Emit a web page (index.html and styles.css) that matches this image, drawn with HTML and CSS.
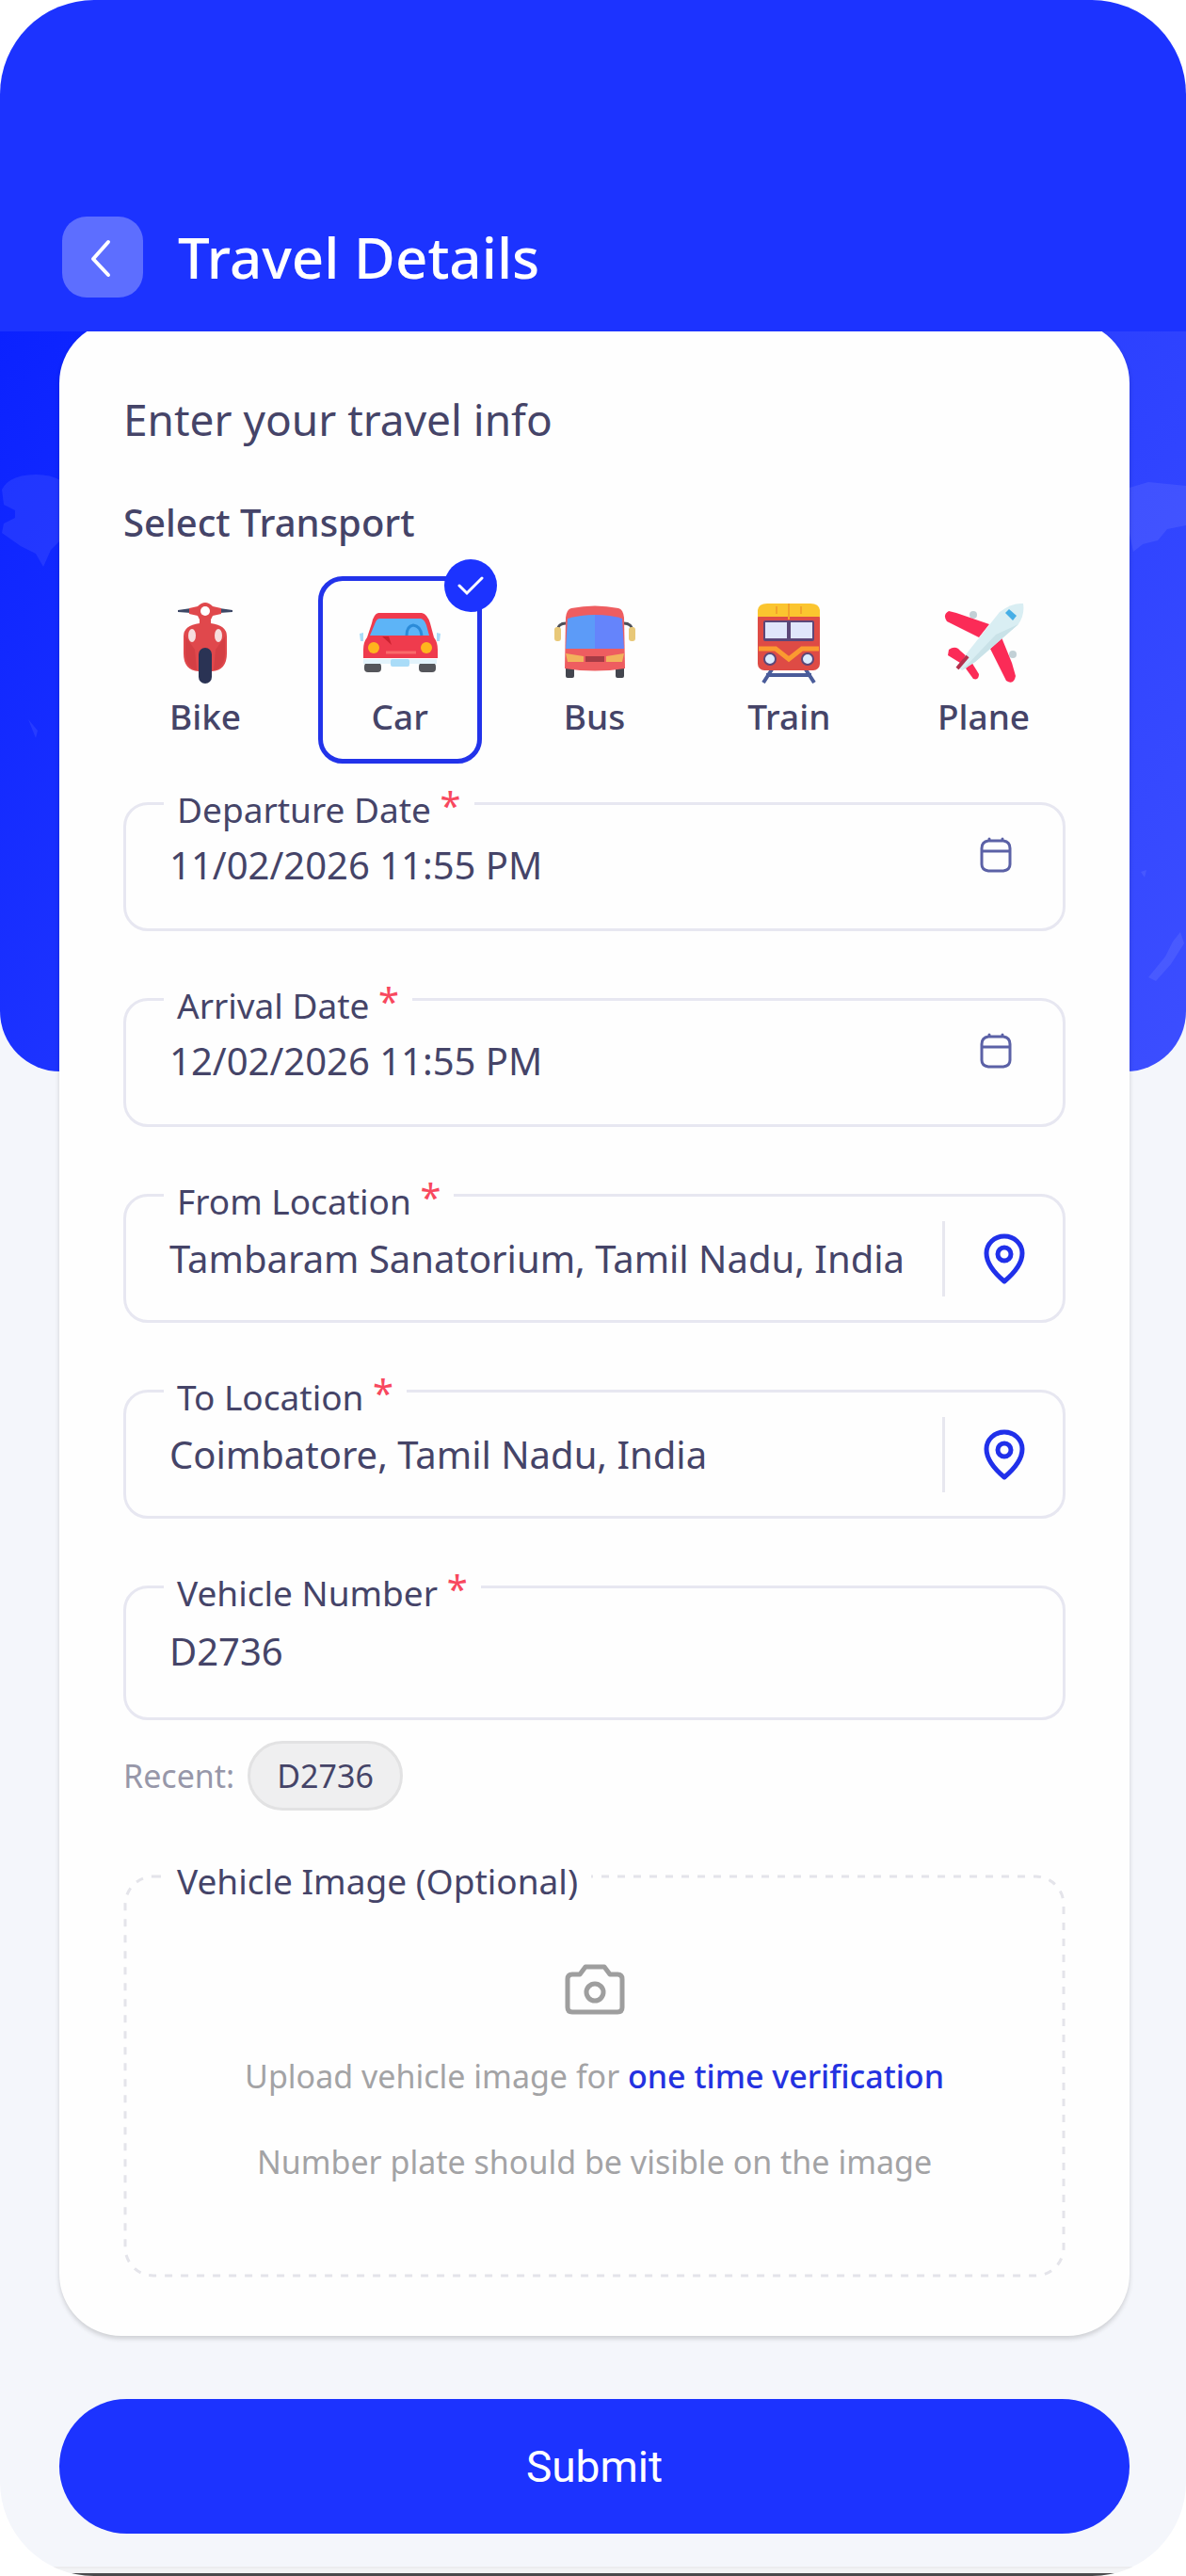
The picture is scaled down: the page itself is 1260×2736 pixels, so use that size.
FILE: index.html
```
<!DOCTYPE html>
<html lang="en">
<head>
  <meta charset="UTF-8">
  <meta name="viewport" content="width=device-width, initial-scale=1">
  <title>Travel Details</title>
  <link rel="stylesheet" href="styles.css">
</head>
<body>
  <div class="screen">
    <header class="header">
      <button type="button" class="back-btn" aria-label="Back">
        <svg viewBox="0 0 86 86"><path d="M49 27 L33 45 L49 62"/></svg>
      </button>
      <h1>Travel Details</h1>
    </header>

    <main>
      <!-- blue map backdrop -->
      <div class="hero">
        <svg class="map map-left" viewBox="0 0 64 786">
          <path d="M2 168 Q10 152 38 152 Q54 152 64 158 V222 L54 232 L46 250 L38 236 L22 228 L2 214 L4 204 L16 198 L16 190 L4 184 Z"/>
          <path d="M30 412 L40 424 L38 432 Z"/>
        </svg>
        <svg class="map map-right" viewBox="0 0 60 786">
          <path d="M0 166 L20 160 L60 164 V206 L40 210 L30 222 L14 226 L4 234 L0 214 Z"/>
          <path d="M46 648 L54 638 L58 650 L44 672 L28 690 L20 686 L38 664 Z"/>
          <path d="M12 574 L18 572 L16 580 Z"/>
        </svg>
      </div>

      <form>
        <div class="card">
          <h2>Enter your travel info</h2>

          <h3 id="transportTitle">Select Transport</h3>
          <div class="transport" role="radiogroup" aria-labelledby="transportTitle">
            <label class="tile">
              <input type="radio" name="transport" value="bike">
              <svg viewBox="0 0 86 86">
                <path d="M14 8 L28 6 V11 L14 10 Z M72 8 L58 6 V11 L72 10 Z" fill="#3d4866"/>
                <path d="M26 6 L35 4 Q43 -4 51 4 L60 6 V12 L51 14 L48 20 H38 L35 14 L26 12 Z" fill="#e0484c"/>
                <path d="M37 17 H49 V22 Q66 24 66 36 V54 Q66 72 50 73 H36 Q20 72 20 54 V36 Q20 24 37 22 Z" fill="#e0484c"/>
                <path d="M22 36 V54 Q22 68 34 72 L32 50 Z M64 36 V54 Q64 68 52 72 L54 50 Z" fill="#d43f44"/>
                <circle cx="43" cy="9" r="5" fill="#fff"/>
                <ellipse cx="29" cy="35" rx="4" ry="7" fill="#f6dede"/>
                <ellipse cx="57" cy="35" rx="4" ry="7" fill="#f6dede"/>
                <rect x="36" y="48" width="14" height="38" rx="7" fill="#2a3354"/>
              </svg>
              <span>Bike</span>
            </label>
            <label class="tile">
              <input type="radio" name="transport" value="car" checked>
              <svg viewBox="0 0 86 86">
                <rect x="5" y="64" width="18" height="10" rx="4" fill="#55565b"/>
                <rect x="63" y="64" width="18" height="10" rx="4" fill="#55565b"/>
                <path d="M0 33 L4 32 V41 H1 Z M86 33 L82 32 V41 H85 Z" fill="#a9dcf8"/>
                <path d="M4 60 H82 V65 H4 Z" fill="#e3f3fb"/>
                <path d="M20 11 H66 Q72 12 75 22 L79 37 Q83 42 83 50 V59 H4 V50 Q4 42 8 37 L13 22 Q15 12 20 11 Z" fill="#ef3b4d"/>
                <path d="M21 17 H65 Q69 18 71 24 L74 35 H11 L16 23 Q18 17 21 17 Z" fill="#5db4f7"/>
                <path d="M50 35 Q50 25 57 24 Q65 25 66 35" fill="none" stroke="#2b8bd8" stroke-width="3"/>
                <path d="M24 36 L34 45 L31 36 Z" fill="#c9222f"/>
                <path d="M28 53 H60" stroke="#f96a6a" stroke-width="3"/>
                <circle cx="15" cy="48" r="6" fill="#ffb51d"/>
                <circle cx="71" cy="48" r="6" fill="#ffb51d"/>
                <rect x="33" y="60" width="20" height="8" rx="2" fill="#a9dcf8"/>
              </svg>
              <span>Car</span>
              <i class="tick"><svg viewBox="0 0 56 56"><path d="M16 28 L24 36 L40 20"/></svg></i>
            </label>
            <label class="tile">
              <input type="radio" name="transport" value="bus">
              <svg viewBox="0 0 86 86">
                <path d="M14 22 Q3 21 3 32 M72 22 Q83 21 83 32" fill="none" stroke="#4d4f58" stroke-width="3"/>
                <rect x="0" y="26" width="7" height="15" rx="3" fill="#e8c878"/>
                <rect x="79" y="26" width="7" height="15" rx="3" fill="#e8c878"/>
                <rect x="12" y="68" width="9" height="12" rx="2" fill="#43454e"/>
                <rect x="65" y="68" width="9" height="12" rx="2" fill="#43454e"/>
                <path d="M18 6 Q43 1 68 6 Q73 7 74 16 L75 70 Q43 75 11 70 L12 16 Q13 7 18 6 Z" fill="#ee5d60"/>
                <path d="M14 17 Q28 13 43 13 V49 H12 Z" fill="#5c9bf8"/>
                <path d="M43 13 Q60 13 72 17 L74 49 H43 Z" fill="#6584fb"/>
                <path d="M12 54 L31 57 V63 H14 Z M74 54 L55 57 V63 H72 Z" fill="#f2b35c"/>
                <rect x="33" y="57" width="20" height="6" fill="#a63b45"/>
              </svg>
              <span>Bus</span>
            </label>
            <label class="tile">
              <input type="radio" name="transport" value="train">
              <svg viewBox="0 0 86 86">
                <path d="M27 68 L16 85 M59 68 L70 85 M19 77 H67" fill="none" stroke="#4a5c9a" stroke-width="4"/>
                <rect x="10" y="9" width="66" height="63" rx="7" fill="#de4b45"/>
                <path d="M10 15 V8 Q11 1 20 1 H66 Q75 1 76 8 V15 Z" fill="#fbc52f"/>
                <path d="M30 4 V12 M43 1 V18 M56 4 V12" stroke="#f2a32b" stroke-width="2"/>
                <rect x="16" y="19" width="54" height="22" rx="2" fill="#5c4778"/>
                <rect x="18" y="21" width="23" height="17" fill="#e0e6fb"/>
                <rect x="45" y="21" width="23" height="17" fill="#e0e6fb"/>
                <path d="M11 49 H29 L43 60 L57 49 H75" fill="none" stroke="#fb9a30" stroke-width="5"/>
                <circle cx="23" cy="60" r="6" fill="#dcecff" stroke="#5c4778" stroke-width="2"/>
                <circle cx="63" cy="60" r="6" fill="#dcecff" stroke="#5c4778" stroke-width="2"/>
              </svg>
              <span>Train</span>
            </label>
            <label class="tile">
              <input type="radio" name="transport" value="plane">
              <svg viewBox="0 0 86 86">
                <circle cx="32" cy="13" r="4" fill="#c2d0d6"/>
                <circle cx="74" cy="55" r="4" fill="#c2d0d6"/>
                <path d="M6 9 L14 11 L49 23 L38 37 L4 20 Q-1 13 6 9 Z" fill="#fb2b57"/>
                <path d="M62 37 L50 49 L67 83 Q75 88 77 78 L73 64 Z" fill="#fb2b57"/>
                <path d="M6 50 Q13 45 18 51 L26 58 L18 64 L5 56 Z" fill="#fb2b57"/>
                <path d="M30 63 L24 70 L32 81 Q38 83 38 76 Z" fill="#fb2b57"/>
                <path d="M85 1 Q87 12 80 23 L34 63 L20 72 L16 69 L25 54 L60 10 Q73 0 85 1 Z" fill="#d9eef3"/>
                <path d="M80 23 L34 63 L20 72 L56 34 Z" fill="#c9e2e8"/>
                <path d="M70 7 L78 14 L74 19 L66 11 Z" fill="#46aee6"/>
                <path d="M15 70 L26 57" stroke="#b2304c" stroke-width="4"/>
              </svg>
              <span>Plane</span>
            </label>
          </div>

          <div class="fields">
            <div class="field field-date">
              <label for="departure">Departure Date <b>*</b></label>
              <input type="text" id="departure" value="11/02/2026 11:55 PM">
              <svg class="calendar" viewBox="0 0 34 38"><path d="M9 4 H25 Q32 5 32 12 V29 Q32 35 25 36 H9 Q2 35 2 29 V12 Q2 5 9 4 Z M2 15 H32 M10 2 V4 M24 2 V4"/></svg>
            </div>
            <div class="field field-date">
              <label for="arrival">Arrival Date <b>*</b></label>
              <input type="text" id="arrival" value="12/02/2026 11:55 PM">
              <svg class="calendar" viewBox="0 0 34 38"><path d="M9 4 H25 Q32 5 32 12 V29 Q32 35 25 36 H9 Q2 35 2 29 V12 Q2 5 9 4 Z M2 15 H32 M10 2 V4 M24 2 V4"/></svg>
            </div>
            <div class="field">
              <label for="from">From Location <b>*</b></label>
              <input type="text" id="from" value="Tambaram Sanatorium, Tamil Nadu, India">
              <button type="button" class="pin-btn" aria-label="Pick from location">
                <svg viewBox="0 0 44 54"><path d="M22 51 Q3 35 3 21 A19 18 0 0 1 41 21 Q41 35 22 51 Z"/><circle cx="22" cy="22" r="7"/></svg>
              </button>
            </div>
            <div class="field">
              <label for="to">To Location <b>*</b></label>
              <input type="text" id="to" value="Coimbatore, Tamil Nadu, India">
              <button type="button" class="pin-btn" aria-label="Pick to location">
                <svg viewBox="0 0 44 54"><path d="M22 51 Q3 35 3 21 A19 18 0 0 1 41 21 Q41 35 22 51 Z"/><circle cx="22" cy="22" r="7"/></svg>
              </button>
            </div>
            <div class="field field-tall">
              <label for="vehicle">Vehicle Number <b>*</b></label>
              <input type="text" id="vehicle" value="D2736">
            </div>
          </div>

          <div class="recent">
            <span>Recent:</span>
            <button type="button" class="chip">D2736</button>
          </div>

          <div class="upload">
            <svg class="upload-border"><rect x="2" y="2" rx="30"/></svg>
            <label class="upload-title" for="vehicleImage">Vehicle Image (Optional)</label>
            <input type="file" id="vehicleImage" accept="image/*">
            <svg class="camera" viewBox="0 0 64 54"><path d="M22 3 H42 L48 11 H56 Q61 11 61 16 V46 Q61 51 56 51 H8 Q3 51 3 46 V16 Q3 11 8 11 H16 Z"/><circle cx="32" cy="30" r="9"/></svg>
            <p>Upload vehicle image for <strong>one time verification</strong></p>
            <p>Number plate should be visible on the image</p>
          </div>
        </div>

        <button type="submit" class="submit">Submit</button>
      </form>
    </main>

    <footer class="nav-edge"></footer>
  </div>
</body>
</html>
```
FILE: styles.css
```
* {
  box-sizing: border-box;
}
body {
  margin: 0;
  background: #fff;
  font-family: "Noto Sans", sans-serif;
  color: #454468;
}
h1, h2, h3, p {
  margin: 0;
}
input, button {
  font-family: inherit;
  color: inherit;
}
svg {
  display: block;
}

.screen {
  display: flex;
  flex-direction: column;
  min-height: 100vh;
  background: #f4f6fb;
  border-radius: 100px;
  overflow: hidden;
}

/* header */
.header {
  position: relative;
  z-index: 2;
  display: flex;
  align-items: center;
  gap: 37px;
  padding: 230px 66px 36px;
  background: #1c33ff;
}
.back-btn {
  width: 86px;
  height: 86px;
  padding: 0;
  border: 0;
  border-radius: 26px;
  background: #5d6eff;
}
.back-btn svg {
  fill: none;
  stroke: #fff;
  stroke-width: 4;
  stroke-linecap: round;
  stroke-linejoin: round;
}
h1 {
  font-size: 60px;
  line-height: 80px;
  font-weight: 500;
  color: #fff;
}

/* backdrop */
main {
  position: relative;
  flex: 1;
  padding: 0 60px 0 63px;
}
.hero {
  position: absolute;
  top: 0;
  left: 0;
  right: 0;
  height: 786px;
  border-radius: 0 0 64px 64px;
  background: linear-gradient(125deg, #0b22ff 0%, #2339ff 45%, #3c4eff 100%);
  overflow: hidden;
}
.map {
  position: absolute;
  top: 0;
  height: 786px;
  fill: rgba(255, 255, 255, 0.08);
}
.map-left {
  left: 0;
  width: 64px;
}
.map-right {
  right: 0;
  width: 60px;
}

/* card */
.card {
  position: relative;
  margin-top: -11px;
  padding: 74px 68px 62px;
  background: #fefefe;
  border-radius: 66px;
  box-shadow: 0 3px 5px rgba(0, 0, 0, 0.16);
}
h2 {
  font-size: 46px;
  line-height: 60px;
  font-weight: 400;
}
h3 {
  margin-top: 54px;
  font-size: 40px;
  line-height: 52px;
  font-weight: 500;
}

/* transport */
.transport {
  display: flex;
  justify-content: space-between;
  margin-top: 31px;
}
.tile {
  position: relative;
  display: flex;
  flex-direction: column;
  align-items: center;
  gap: 11px;
  width: 174px;
  height: 199px;
  padding-top: 23px;
  border: 5px solid transparent;
  border-radius: 26px;
  font-size: 37px;
  line-height: 48px;
  font-weight: 500;
}
.tile:has(input:checked) {
  border-color: #2233ea;
}
.tile input {
  position: absolute;
  opacity: 0;
}
.tile > svg {
  width: 86px;
  height: 86px;
}
.tick {
  position: absolute;
  top: -23px;
  right: -21px;
  width: 56px;
  height: 56px;
  border-radius: 50%;
  background: #1c33ff;
}
.tick svg {
  fill: none;
  stroke: #fff;
  stroke-width: 3;
  stroke-linecap: round;
}

/* fields */
.fields {
  display: flex;
  flex-direction: column;
  gap: 71px;
  margin-top: 41px;
}
.field {
  position: relative;
  display: flex;
  align-items: center;
  height: 137px;
  padding: 0 40px 0 46px;
  border: 3px solid #e7e7f1;
  border-radius: 26px;
}
.field-date {
  padding-bottom: 4px;
}
.field-tall {
  height: 143px;
  padding-bottom: 4px;
}
.field label,
.upload-title {
  position: absolute;
  top: -15px;
  left: 40px;
  padding: 0 14px;
  background: #fefefe;
  font-size: 37px;
  line-height: 40px;
}
.field b {
  font-size: 40px;
  line-height: 20px;
  font-weight: 400;
  vertical-align: 4px;
  color: #f8485e;
}
.field input {
  flex: 1;
  min-width: 0;
  padding: 0;
  border: 0;
  background: none;
  font-size: 40px;
  outline: none;
}
.calendar {
  align-self: flex-start;
  width: 34px;
  height: 38px;
  margin: 34px 14px 0 0;
  fill: none;
  stroke: #5b61a6;
  stroke-width: 3;
  stroke-linecap: round;
}
.pin-btn {
  padding: 13px 0 13px 41px;
  border: 0;
  border-left: 3px solid #e7e7ef;
  background: none;
}
.pin-btn svg {
  width: 44px;
  height: 54px;
  fill: none;
  stroke: #2030ea;
  stroke-width: 5;
  stroke-linejoin: round;
}

/* recent */
.recent {
  display: flex;
  align-items: center;
  gap: 14px;
  margin-top: 22px;
  font-size: 34px;
  color: #9797a9;
}
.chip {
  height: 74px;
  padding: 0 28px;
  border: 3px solid #e2e2e3;
  border-radius: 37px;
  background: #efeff0;
  font-size: 34px;
  color: #454468;
}

/* upload */
.upload {
  position: relative;
  display: flex;
  flex-direction: column;
  align-items: center;
  margin-top: 68px;
  padding: 95px 40px 99px;
  font-size: 34px;
  line-height: 48px;
  color: #a3a3a5;
}
.upload-border {
  position: absolute;
  top: 0;
  left: 0;
  width: 100%;
  height: 100%;
  fill: none;
  stroke: #e4e4ea;
  stroke-width: 3;
  stroke-dasharray: 8 9;
}
.upload-border rect {
  width: calc(100% - 4px);
  height: calc(100% - 4px);
}
.upload-title {
  left: 43px;
  top: -13px;
  color: #454468;
}
.upload input {
  position: absolute;
  width: 1px;
  height: 1px;
  opacity: 0;
}
.camera {
  width: 64px;
  height: 54px;
  margin-bottom: 41px;
  fill: none;
  stroke: #9e9e9e;
  stroke-width: 5;
  stroke-linejoin: round;
}
.upload p + p {
  margin-top: 43px;
}
.upload strong {
  font-weight: 500;
  color: #2432e0;
}

.submit {
  display: block;
  width: 100%;
  height: 143px;
  margin: 67px 0 0;
  border: 0;
  border-radius: 72px;
  background: #1c33ff;
  font-family: Roboto, sans-serif;
  font-size: 46px;
  color: #fff;
}
.nav-edge {
  height: 10px;
  margin-top: 34px;
  border-top: 2px solid #ececee;
  border-bottom: 3px solid #4a4a4c;
  background: #f2f3f5;
}
```
